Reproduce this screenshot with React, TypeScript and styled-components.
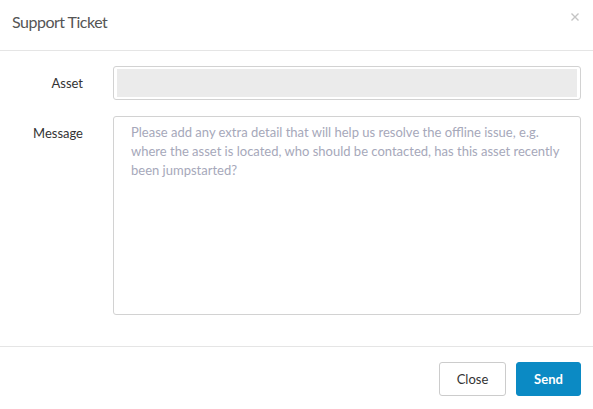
import React from "react";
import styled, { createGlobalStyle } from "styled-components";

const Global = createGlobalStyle`
  html, body { margin: 0; padding: 0; background: #fff; }
  body { font-family: Lato, "Open Sans", sans-serif; color: #333; }
  * { box-sizing: border-box; }
`;

const Dialog = styled.div`
  width: 593px;
  height: 409px;
  background: #fff;
  display: flex;
  flex-direction: column;
`;

const Header = styled.div`
  height: 51px;
  padding: 0 12px;
  border-bottom: 1px solid #e5e5e5;
  display: flex;
  align-items: center;
  justify-content: space-between;
`;

const Title = styled.h4`
  margin: 0;
  font-size: 16px;
  letter-spacing: -0.5px;
  font-weight: 400;
  color: #555;
  line-height: 20px;
  margin-top: -7px;
`;

const CloseX = styled.button`
  border: 0;
  background: none;
  padding: 0;
  width: 10px;
  height: 10px;
  margin-top: -17px;
  margin-right: 1px;
  display: flex;
  cursor: pointer;
`;

const Body = styled.div`
  flex: 1;
  padding: 15px 12px 0 12px;
  display: grid;
  grid-template-columns: 71px 1fr;
  column-gap: 30px;
  row-gap: 16px;
  align-content: start;
`;

const Label = styled.label`
  text-align: right;
  font-size: 13px;
  line-height: 19px;
  padding-top: 8px;
  color: #333;
`;

const InputBox = styled.div`
  height: 34px;
  border: 1px solid #d2d2d2;
  border-radius: 3px;
  padding: 2px 3px;
  display: flex;
`;

const InputFill = styled.div`
  flex: 1;
  background: #ebebeb;
`;

const TextArea = styled.textarea`
  height: 199px;
  border: 1px solid #d2d2d2;
  border-radius: 3px;
  padding: 6px 17px;
  font-family: inherit;
  font-size: 13px;
  line-height: 19px;
  color: #333;
  resize: none;
  outline: none;
  &::placeholder { color: #a6a8ba; }
`;

const Footer = styled.div`
  height: 63px;
  border-top: 1px solid #e5e5e5;
  padding: 15px 12px 0 12px;
  display: flex;
  justify-content: flex-end;
  align-items: flex-start;
  gap: 10px;
`;

const Button = styled.button<{ $primary?: boolean }>`
  height: 34px;
  width: ${(p) => (p.$primary ? "65px" : "67px")};
  border-radius: 3px;
  font-family: inherit;
  font-size: 13px;
  cursor: pointer;
  border: 1px solid ${(p) => (p.$primary ? "#0b8ac4" : "#cccccc")};
  background: ${(p) => (p.$primary ? "#0b8ac4" : "#fff")};
  color: ${(p) => (p.$primary ? "#fff" : "#333")};
  font-weight: ${(p) => (p.$primary ? 700 : 400)};
`;

export default function App() {
  return (
    <>
      <Global />
      <Dialog>
        <Header>
          <Title>Support Ticket</Title>
          <CloseX aria-label="Close">
            <svg width="10" height="10" viewBox="0 0 10 10">
              <path d="M1.5 1.5 L8.5 8.5 M8.5 1.5 L1.5 8.5" stroke="#c4c4c4" strokeWidth="1.4" />
            </svg>
          </CloseX>
        </Header>
        <Body>
          <Label>Asset</Label>
          <InputBox>
            <InputFill />
          </InputBox>
          <Label>Message</Label>
          <TextArea placeholder="Please add any extra detail that will help us resolve the offline issue, e.g. where the asset is located, who should be contacted, has this asset recently been jumpstarted?" />
        </Body>
        <Footer>
          <Button>Close</Button>
          <Button $primary>Send</Button>
        </Footer>
      </Dialog>
    </>
  );
}
